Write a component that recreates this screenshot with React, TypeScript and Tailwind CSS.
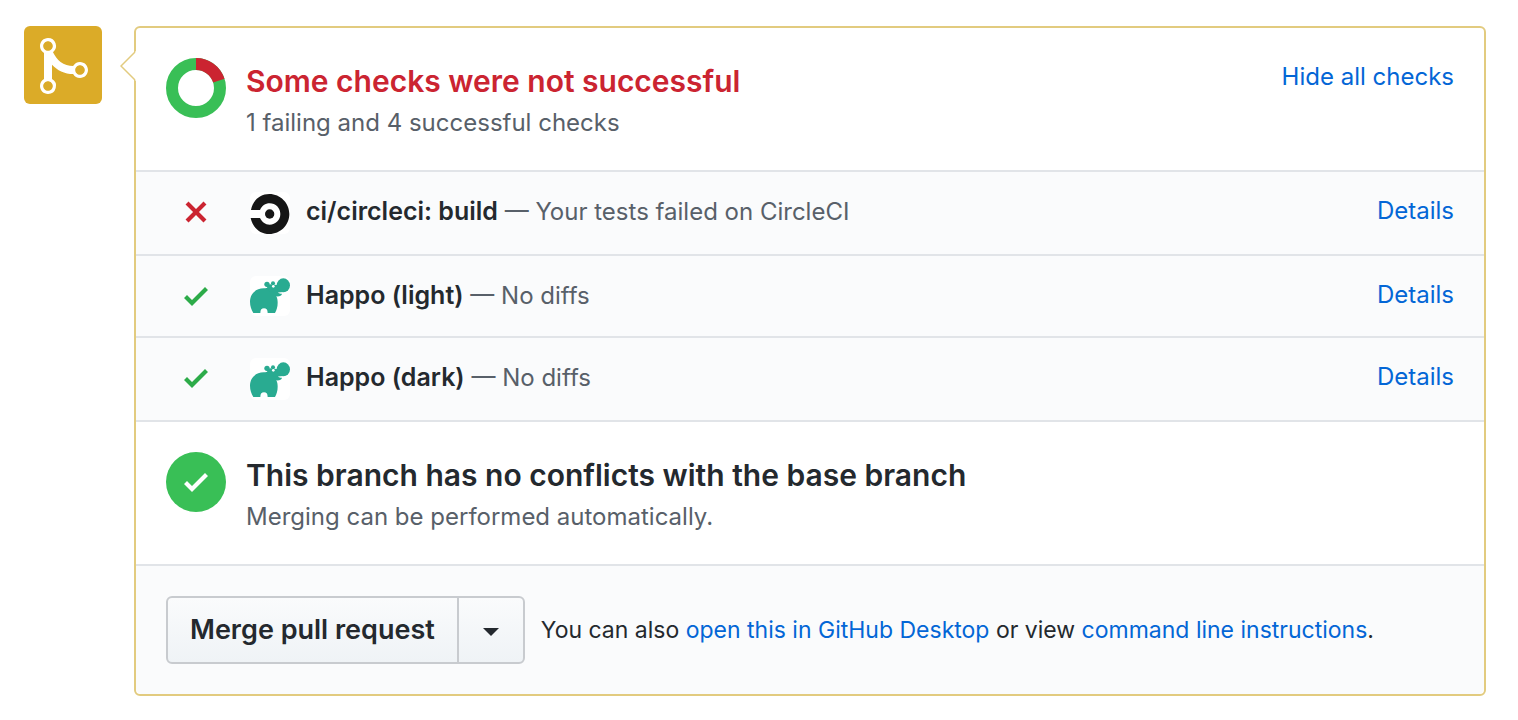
import React from "react";

const CHECK_PATH = "M12 5l-8 8-4-4 1.5-1.5L4 10l6.5-6.5L12 5z";

function CheckIcon({ className }: { className?: string }) {
  return (
    <svg viewBox="0 0 12 16" className={`h-8 w-6 fill-current ${className ?? ""}`} aria-hidden="true">
      <path d={CHECK_PATH} />
    </svg>
  );
}

function CrossIcon({ className }: { className?: string }) {
  return (
    <svg viewBox="0 0 12 16" className={`h-8 w-6 fill-current ${className ?? ""}`} aria-hidden="true">
      <path d="M7.48 8l3.75 3.75-1.48 1.48L6 9.48l-3.75 3.75-1.48-1.48L4.52 8 .77 4.25l1.48-1.48L6 6.52l3.75-3.75 1.48 1.48L7.48 8z" />
    </svg>
  );
}

function MergeIcon() {
  return (
    <svg viewBox="0 0 12 16" className="h-16 w-12 fill-white" aria-hidden="true">
      <path
        fillRule="evenodd"
        d="M10 7c-.73 0-1.38.41-1.73 1.02V8C7.22 7.98 6 7.64 5.14 6.98c-.75-.58-1.5-1.61-1.89-2.44A1.993 1.993 0 0 0 2 .99C.89.99 0 1.89 0 3a2 2 0 0 0 1 1.72v6.56c-.59.35-1 .99-1 1.72 0 1.11.89 2 2 2a1.993 1.993 0 0 0 1-3.72V7.67c.67.7 1.44 1.27 2.3 1.69.86.42 2.03.63 2.97.64v-.02c.36.61 1 1.02 1.73 1.02 1.11 0 2-.89 2-2 0-1.11-.89-2-2-2zm-6.8 6c0 .66-.55 1.2-1.2 1.2-.65 0-1.2-.55-1.2-1.2 0-.65.55-1.2 1.2-1.2.65 0 1.2.55 1.2 1.2zM2 4.2C1.34 4.2.8 3.65.8 3c0-.65.55-1.2 1.2-1.2.65 0 1.2.55 1.2 1.2 0 .65-.55 1.2-1.2 1.2zm8 6c-.66 0-1.2-.55-1.2-1.2 0-.65.55-1.2 1.2-1.2.65 0 1.2.55 1.2 1.2 0 .65-.55 1.2-1.2 1.2z"
      />
    </svg>
  );
}

function ChecksDonut() {
  return (
    <svg viewBox="0 0 60 60" className="size-[60px] shrink-0" aria-hidden="true">
      <circle cx="30" cy="30" r="24" fill="none" stroke="#39bf56" strokeWidth="12" />
      <path d="M30 6A24 24 0 0 1 52.83 22.58" fill="none" stroke="#cb2431" strokeWidth="12" />
    </svg>
  );
}

function CircleCiLogo() {
  return (
    <svg viewBox="0 0 120 126" className="h-[42px] w-10 rounded-md bg-white" aria-hidden="true">
      <path
        fill="#161616"
        d="M3 54C7 27 29 6 58 6c33 0 60 27 60 60s-27 60-60 60C29 126 8 106 2 78h28c5 11 16 20 29 20 18 0 32-14 32-32S77 34 59 34c-13 0-24 8-29 20z"
      />
      <circle cx="59" cy="66" r="14" fill="#161616" />
    </svg>
  );
}

function HappoLogo() {
  return (
    <svg
      viewBox="0 0 120 120"
      className="h-10 w-10 rounded-md bg-white group-odd:h-[42px]"
      preserveAspectRatio="xMidYMax meet"
      aria-hidden="true"
    >
      <g fill="#29ab91">
        <path d="M10 111C4 101 0 90 0 77C0 53 18 37 41 37C48 37 51 36 55 33L62 28L82 28L90 46L84 49C86 53 90 54 96 53C95 59 88 62 79 61C82 67 83 73 83 80C83 92 80 102 75 111H53C53 101 49 97 42 97S31 101 31 111Z" />
        <circle cx="51" cy="25" r="8" />
        <circle cx="69" cy="22" r="6" />
        <path d="M50 31L60 25L80 27L88 14L100 48L76 50L56 44Z" />
        <ellipse cx="100" cy="28" rx="20" ry="21" />
      </g>
      <circle cx="70" cy="31" r="4" fill="#fff" />
    </svg>
  );
}

type Check = {
  name: string;
  note: string;
  passed: boolean;
  logo: React.ReactNode;
};

const checks: Check[] = [
  { name: "ci/circleci: build", note: "Your tests failed on CircleCI", passed: false, logo: <CircleCiLogo /> },
  { name: "Happo (light)", note: "No diffs", passed: true, logo: <HappoLogo /> },
  { name: "Happo (dark)", note: "No diffs", passed: true, logo: <HappoLogo /> },
];

function CheckRow({ check }: { check: Check }) {
  return (
    <li className="group flex min-h-[84px] items-start border-t-2 border-[#e1e4e8] bg-[#fafbfc] pr-[30px] pl-12 even:min-h-[82px]">
      {check.passed ? <CheckIcon className="mt-6 text-[#2cab49]" /> : <CrossIcon className="mt-6 text-[#cb2431]" />}
      <span className="mt-5 ml-[42px] shrink-0">{check.logo}</span>
      <p className="mt-5 ml-4 flex-1 text-[24px] leading-[38px] text-[#586069]">
        <strong className="text-[25px] font-semibold text-[#24292e]">{check.name}</strong> — {check.note}
      </p>
      <a href="#details" className="mt-5 text-[24px] leading-[38px] text-[#0366d6] hover:underline">
        Details
      </a>
    </li>
  );
}

export default function App() {
  return (
    <main className="flex items-start gap-8 bg-white pt-[26px] pr-8 pb-6 pl-6 font-['Inter','Liberation_Sans',sans-serif] text-[#24292e]">
      <div className="size-[78px] shrink-0 rounded-md bg-[#dbab28] pt-2 pl-4">
        <MergeIcon />
      </div>

      <div className="relative min-w-0 flex-1 rounded-md border-2 border-[#e2cb7f]">
        <svg viewBox="0 0 16 30" className="absolute top-[23px] -left-4 h-[30px] w-4" aria-hidden="true">
          <path d="M16 0L1 15L16 30Z" fill="#fff" />
          <path d="M15 1L1 15L15 29" fill="none" stroke="#e2cb7f" strokeWidth="1.5" />
        </svg>

        <section className="flex min-h-[142px] items-start gap-5 px-[30px] pt-[30px]">
          <ChecksDonut />
          <div className="flex-1">
            <h3 className="text-[30px] leading-[46px] font-semibold text-[#cb2431]">Some checks were not successful</h3>
            <p className="text-[24px] leading-[38px] text-[#586069]">1 failing and 4 successful checks</p>
          </div>
          <button type="button" className="text-[24px] leading-[38px] text-[#0366d6] hover:underline">
            Hide all checks
          </button>
        </section>

        <ul>
          {checks.map((check) => (
            <CheckRow key={check.name} check={check} />
          ))}
        </ul>

        <section className="flex min-h-[144px] items-start gap-5 border-t-2 border-[#e1e4e8] px-[30px] pt-[30px]">
          <div className="flex size-[60px] shrink-0 items-center justify-center rounded-full bg-[#39bf56]">
            <CheckIcon className="text-white" />
          </div>
          <div className="flex-1">
            <h3 className="text-[30px] leading-[46px] font-semibold">This branch has no conflicts with the base branch</h3>
            <p className="text-[24px] leading-[38px] text-[#586069]">Merging can be performed automatically.</p>
          </div>
        </section>

        <section className="flex items-center gap-4 rounded-b-md border-t-2 border-[#e1e4e8] bg-[#fafbfc] p-[30px]">
          <div className="flex h-[68px] shrink-0 rounded-md border-2 border-[#c8cbcf] bg-linear-to-b from-[#fafbfc] to-[#eff3f6]">
            <button type="button" className="px-[22px] text-[27px] leading-10 font-semibold">
              Merge pull request
            </button>
            <button
              type="button"
              aria-label="Select merge method"
              className="flex w-[66px] items-center justify-center border-l-2 border-[#c8cbcf]"
            >
              <svg viewBox="0 0 16 8" className="mt-1 h-2 w-4 fill-[#24292e]" aria-hidden="true">
                <path d="M0 0h16L8 8z" />
              </svg>
            </button>
          </div>
          <p className="text-[23px] leading-9">
            You can also{" "}
            <a href="#desktop" className="text-[#0366d6] hover:underline">
              open this in GitHub Desktop
            </a>{" "}
            or view{" "}
            <a href="#cli" className="text-[#0366d6] hover:underline">
              command line instructions
            </a>
            .
          </p>
        </section>
      </div>
    </main>
  );
}
